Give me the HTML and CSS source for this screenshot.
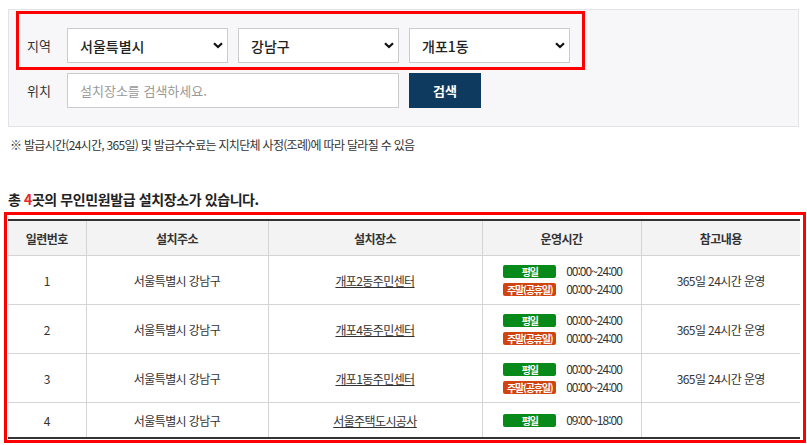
FILE: index.html
```html
<!DOCTYPE html>
<html lang="ko">
<head>
  <meta charset="UTF-8">
  <title>무인민원발급 설치장소</title>
  <link rel="stylesheet" href="styles.css">
</head>
<body>
  <div class="wrap">
    <!-- 검색 영역 -->
    <div class="search-box">
      <div class="search-row region-row">
        <span class="label">지역</span>
        <div class="select-wrap">
          <select><option>서울특별시</option></select>
          <svg class="chev" width="10" height="7" viewBox="0 0 10 7"><path d="M1 1.2 L5 5 L9 1.2" fill="none" stroke="#111" stroke-width="2.2"/></svg>
        </div>
        <div class="select-wrap">
          <select><option>강남구</option></select>
          <svg class="chev" width="10" height="7" viewBox="0 0 10 7"><path d="M1 1.2 L5 5 L9 1.2" fill="none" stroke="#111" stroke-width="2.2"/></svg>
        </div>
        <div class="select-wrap">
          <select><option>개포1동</option></select>
          <svg class="chev" width="10" height="7" viewBox="0 0 10 7"><path d="M1 1.2 L5 5 L9 1.2" fill="none" stroke="#111" stroke-width="2.2"/></svg>
        </div>
      </div>
      <div class="search-row place-row">
        <span class="label">위치</span>
        <input type="text" class="place-input" placeholder="설치장소를 검색하세요.">
        <button class="btn-search">검색</button>
      </div>
    </div>

    <p class="note">※ 발급시간(24시간, 365일) 및 발급수수료는 지치단체 사정(조례)에 따라 달라질 수 있음</p>

    <h3 class="total">총 <em>4</em>곳의 무인민원발급 설치장소가 있습니다.</h3>

    <!-- 목록 -->
    <div class="table-box">
      <table class="list">
        <colgroup>
          <col style="width:78px"><col style="width:182px"><col style="width:214px"><col style="width:159px"><col>
        </colgroup>
        <thead>
          <tr><th>일련번호</th><th>설치주소</th><th>설치장소</th><th>운영시간</th><th>참고내용</th></tr>
        </thead>
        <tbody>
          <tr>
            <td>1</td><td>서울특별시 강남구</td><td><a href="#">개포2동주민센터</a></td>
            <td>
              <div class="time"><span class="badge weekday">평일</span><span class="hours">00:00~24:00</span></div>
              <div class="time"><span class="badge weekend">주말(공휴일)</span><span class="hours">00:00~24:00</span></div>
            </td>
            <td>365일 24시간 운영</td>
          </tr>
          <tr>
            <td>2</td><td>서울특별시 강남구</td><td><a href="#">개포4동주민센터</a></td>
            <td>
              <div class="time"><span class="badge weekday">평일</span><span class="hours">00:00~24:00</span></div>
              <div class="time"><span class="badge weekend">주말(공휴일)</span><span class="hours">00:00~24:00</span></div>
            </td>
            <td>365일 24시간 운영</td>
          </tr>
          <tr>
            <td>3</td><td>서울특별시 강남구</td><td><a href="#">개포1동주민센터</a></td>
            <td>
              <div class="time"><span class="badge weekday">평일</span><span class="hours">00:00~24:00</span></div>
              <div class="time"><span class="badge weekend">주말(공휴일)</span><span class="hours">00:00~24:00</span></div>
            </td>
            <td>365일 24시간 운영</td>
          </tr>
          <tr class="short">
            <td>4</td><td>서울특별시 강남구</td><td><a href="#">서울주택도시공사</a></td>
            <td>
              <div class="time"><span class="badge weekday">평일</span><span class="hours">09:00~18:00</span></div>
            </td>
            <td></td>
          </tr>
        </tbody>
      </table>
    </div>
  </div>
</body>
</html>
```

FILE: styles.css
```css
/* 전체 */
body {
  margin: 0;
  padding: 9px 0 0;
  font-family: "Noto Sans CJK KR", "Noto Sans", sans-serif;
  color: #333;
  background: #fff;
}

.wrap {
  margin-left: 8px;
  width: 792px;
}

/* 검색 영역 */
.search-box {
  width: 789px;
  height: 116px;
  background: #f7f7f9;
  border: 1px solid #e3e3e5;
  position: relative;
}

.search-row {
  display: flex;
  align-items: center;
}

.region-row {
  margin: 1px 0 0 7px;
  width: 555px;
  border: 3px solid #f00;
  padding: 14px 0 4px 8px;
  box-sizing: content-box;
  height: 35px;
}

.place-row {
  margin: 3px 0 0 18px;
}

.label {
  width: 40px;
  font-size: 13px;
  color: #333;
}

.select-wrap {
  position: relative;
  margin-right: 10px;
}

.select-wrap select {
  appearance: none;
  -webkit-appearance: none;
  width: 161px;
  height: 35px;
  border: 1px solid #ccc;
  background: #fff;
  padding: 0 0 0 12px;
  font-family: inherit;
  font-size: 14px;
  font-weight: 500;
  color: #222;
  border-radius: 0;
  outline: none;
}

.chev {
  position: absolute;
  right: 5px;
  top: 14px;
  pointer-events: none;
}

.place-input {
  width: 332px;
  height: 35px;
  box-sizing: border-box;
  border: 1px solid #ccc;
  background: #fff;
  padding: 0 12px;
  font-family: inherit;
  font-size: 13px;
  outline: none;
}

.place-input::placeholder {
  color: #999;
}

.btn-search {
  margin-left: 10px;
  width: 72px;
  height: 35px;
  border: none;
  background: #0f3a5f;
  color: #fff;
  font-family: inherit;
  font-size: 13px;
  font-weight: 700;
  cursor: pointer;
}

/* 안내문 */
.note {
  margin: 9px 0 0 2px;
  font-size: 12px;
  letter-spacing: -0.7px;
  color: #333;
}

.total {
  margin: 36px 0 0;
  font-size: 14px;
  font-weight: 700;
  letter-spacing: -0.4px;
  color: #222;
}

.total em {
  font-style: normal;
  color: #e3262e;
}

/* 목록 */
.table-box {
  margin: 3px 0 0 -4px;
  border: 3px solid #f00;
  padding: 4px 3px 1px 1px;
  box-sizing: content-box;
  width: 792px;
}

.list {
  width: 792px;
  border-collapse: collapse;
  table-layout: fixed;
  border-top: 2px solid #333;
  border-bottom: 2px solid #333;
  font-size: 12px;
  letter-spacing: -0.6px;
}

.list th,
.list td {
  border: 1px solid #d4d4d4;
  text-align: center;
  vertical-align: middle;
  padding: 0;
}

.list tr > :first-child { border-left: none; }
.list tr > :last-child { border-right: none; }

.list th {
  height: 34px;
  background: #f3f3f3;
  font-weight: 700;
  color: #333;
}

.list td {
  height: 48px;
}

.list tr.short td {
  height: 34px;
}

.list a {
  color: #333;
  text-decoration: underline;
}

.time {
  display: flex;
  align-items: center;
  justify-content: center;
  margin-left: 2px;
  height: 18px;
}

.badge {
  display: inline-block;
  width: 53px;
  height: 13px;
  line-height: 13px;
  border-radius: 2px;
  color: #fff;
  font-size: 10px;
  font-weight: 700;
  letter-spacing: -1.2px;
  white-space: nowrap;
  overflow: hidden;
}

.badge.weekday { background: #078a19; }
.badge.weekend { background: #d2440e; }

.hours {
  margin-left: 10px;
  font-size: 12px;
  line-height: 16px;
  letter-spacing: -1px;
  color: #333;
}
```
